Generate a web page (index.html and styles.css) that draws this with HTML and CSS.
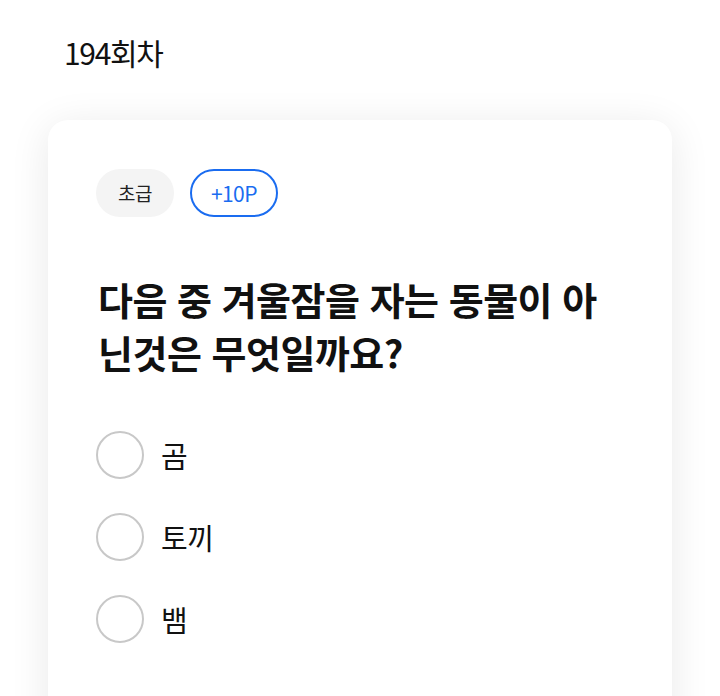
FILE: index.html
```html
<!DOCTYPE html>
<html lang="ko">
<head>
    <meta charset="UTF-8">
    <title>퀴즈</title>
    <link rel="stylesheet" href="styles.css">
</head>
<body>

<div class="page">
    <div class="round">194회차</div>

    <div class="card">
        <div class="tags">
            <span class="tag level">초급</span>
            <span class="tag point">+10P</span>
        </div>

        <div class="question">다음 중 겨울잠을 자는 동물이 아닌것은 무엇일까요?</div>

        <div class="options">
            <label class="option"><span class="radio"></span><span class="option-text">곰</span></label>
            <label class="option"><span class="radio"></span><span class="option-text">토끼</span></label>
            <label class="option"><span class="radio"></span><span class="option-text">뱀</span></label>
        </div>
    </div>
</div>

</body>
</html>
```

FILE: styles.css
```css
* {
    margin: 0;
    padding: 0;
    box-sizing: border-box;
}

body {
    background: #ffffff;
    font-family: "Noto Sans CJK KR", "Noto Sans", sans-serif;
    color: #111;
    overflow: hidden;
}

.page {
    padding: 30px 48px 0;
}

.round {
    padding-left: 16px;
    font-size: 30px;
    letter-spacing: -1.3px;
    line-height: 44px;
    color: #111;
}

.card {
    margin-top: 46px;
    padding: 49px 48px 60px;
    min-height: 620px;
    border-radius: 20px;
    background: #ffffff;
    box-shadow: 0 6px 40px rgba(0, 0, 0, 0.09);
}

.tags {
    display: flex;
    gap: 16px;
}

.tag {
    height: 48px;
    padding: 0 22px;
    border-radius: 24px;
    font-size: 19px;
    line-height: 48px;
    letter-spacing: -0.5px;
}

.level {
    background: #f4f4f4;
    color: #222;
}

.point {
    border: 2px solid #1a6cf0;
    line-height: 44px;
    padding: 0 19px;
    font-size: 21px;
    letter-spacing: -0.6px;
    color: #1a6cf0;
}

.question {
    margin-top: 55px;
    padding-left: 2px;
    font-size: 38px;
    font-weight: 700;
    line-height: 53px;
    letter-spacing: -0.5px;
    word-break: break-all;
    color: #111;
}

.options {
    margin-top: 53px;
    display: flex;
    flex-direction: column;
    gap: 34px;
}

.option {
    display: flex;
    align-items: center;
    gap: 17px;
}

.radio {
    width: 48px;
    height: 48px;
    border-radius: 50%;
    border: 2px solid #c8c8c8;
}

.option-text {
    font-size: 29px;
    letter-spacing: -0.5px;
}
```
